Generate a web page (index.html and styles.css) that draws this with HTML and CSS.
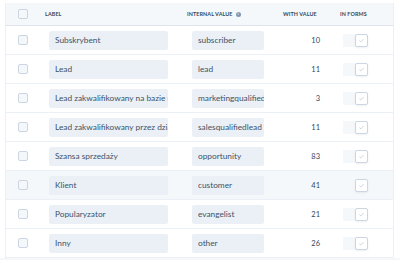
FILE: index.html
```
<!DOCTYPE html>
<html>
<head>
<meta charset="utf-8">
<link rel="stylesheet" href="styles.css">
</head>
<body>
<div class="page">
  <div class="table">
    <div class="row head">
      <div class="c-check"><span class="cb"></span></div>
      <div class="c-label">Label</div>
      <div class="c-int">Internal value <span class="info">i</span></div>
      <div class="c-with">With value</div>
      <div class="c-forms">In forms</div>
    </div>
    <div class="row">
      <div class="c-check"><span class="cb"></span></div>
      <div class="c-label"><div class="field field-label">Subskrybent</div></div>
      <div class="c-int"><div class="field field-int">subscriber</div></div>
      <div class="c-num">10</div>
      <div class="c-forms"><span class="toggle"><span class="pad"></span><span class="box"><svg viewBox="0 0 10 10" width="7" height="7"><polyline points="2,5.2 4,7 8,3" fill="none" stroke="#b0c1d4" stroke-width="1"/></svg></span></span></div>
    </div>
    <div class="row">
      <div class="c-check"><span class="cb"></span></div>
      <div class="c-label"><div class="field field-label">Lead</div></div>
      <div class="c-int"><div class="field field-int">lead</div></div>
      <div class="c-num">11</div>
      <div class="c-forms"><span class="toggle"><span class="pad"></span><span class="box"><svg viewBox="0 0 10 10" width="7" height="7"><polyline points="2,5.2 4,7 8,3" fill="none" stroke="#b0c1d4" stroke-width="1"/></svg></span></span></div>
    </div>
    <div class="row">
      <div class="c-check"><span class="cb"></span></div>
      <div class="c-label"><div class="field field-label">Lead zakwalifikowany na bazie marketingu</div></div>
      <div class="c-int"><div class="field field-int">marketingqualifiedlead</div></div>
      <div class="c-num">3</div>
      <div class="c-forms"><span class="toggle"><span class="pad"></span><span class="box"><svg viewBox="0 0 10 10" width="7" height="7"><polyline points="2,5.2 4,7 8,3" fill="none" stroke="#b0c1d4" stroke-width="1"/></svg></span></span></div>
    </div>
    <div class="row">
      <div class="c-check"><span class="cb"></span></div>
      <div class="c-label"><div class="field field-label">Lead zakwalifikowany przez dział sprzedaży</div></div>
      <div class="c-int"><div class="field field-int">salesqualifiedlead</div></div>
      <div class="c-num">11</div>
      <div class="c-forms"><span class="toggle"><span class="pad"></span><span class="box"><svg viewBox="0 0 10 10" width="7" height="7"><polyline points="2,5.2 4,7 8,3" fill="none" stroke="#b0c1d4" stroke-width="1"/></svg></span></span></div>
    </div>
    <div class="row">
      <div class="c-check"><span class="cb"></span></div>
      <div class="c-label"><div class="field field-label">Szansa sprzedaży</div></div>
      <div class="c-int"><div class="field field-int">opportunity</div></div>
      <div class="c-num">83</div>
      <div class="c-forms"><span class="toggle"><span class="pad"></span><span class="box"><svg viewBox="0 0 10 10" width="7" height="7"><polyline points="2,5.2 4,7 8,3" fill="none" stroke="#b0c1d4" stroke-width="1"/></svg></span></span></div>
    </div>
    <div class="row hover">
      <div class="c-check"><span class="cb"></span></div>
      <div class="c-label"><div class="field field-label">Klient</div></div>
      <div class="c-int"><div class="field field-int">customer</div></div>
      <div class="c-num">41</div>
      <div class="c-forms"><span class="toggle"><span class="pad"></span><span class="box"><svg viewBox="0 0 10 10" width="7" height="7"><polyline points="2,5.2 4,7 8,3" fill="none" stroke="#b0c1d4" stroke-width="1"/></svg></span></span></div>
    </div>
    <div class="row">
      <div class="c-check"><span class="cb"></span></div>
      <div class="c-label"><div class="field field-label">Popularyzator</div></div>
      <div class="c-int"><div class="field field-int">evangelist</div></div>
      <div class="c-num">21</div>
      <div class="c-forms"><span class="toggle"><span class="pad"></span><span class="box"><svg viewBox="0 0 10 10" width="7" height="7"><polyline points="2,5.2 4,7 8,3" fill="none" stroke="#b0c1d4" stroke-width="1"/></svg></span></span></div>
    </div>
    <div class="row">
      <div class="c-check"><span class="cb"></span></div>
      <div class="c-label"><div class="field field-label">Inny</div></div>
      <div class="c-int"><div class="field field-int">other</div></div>
      <div class="c-num">26</div>
      <div class="c-forms"><span class="toggle"><span class="pad"></span><span class="box"><svg viewBox="0 0 10 10" width="7" height="7"><polyline points="2,5.2 4,7 8,3" fill="none" stroke="#b0c1d4" stroke-width="1"/></svg></span></span></div>
    </div>
  </div>
  <div class="band"></div>
</div>
</body>
</html>
```

FILE: styles.css
```
* { box-sizing: border-box; }
html, body { margin: 0; padding: 0; background: #ffffff; }
body {
  font-family: "Lato", "Liberation Sans", sans-serif;
  color: #33475b;
  width: 400px;
  height: 260px;
  overflow: hidden;
}
.page { padding-top: 3px; }
.table {
  margin-left: 5px;
  width: 389px;
  border-left: 1px solid #eaf0f6;
  border-right: 1px solid #eaf0f6;
}
.row {
  display: grid;
  grid-template-columns: 38px 143px 90px 51px 1fr;
  align-items: center;
  height: 29px;
  border-bottom: 1px solid #eaf0f6;
}
.row.head {
  height: 23px;
  background: #f5f8fa;
  border-bottom: 1px solid #dfe3eb;
  font-size: 5.4px;
  font-weight: 700;
  text-transform: uppercase;
  letter-spacing: 0.1px;
  color: #33475b;
}
.row.hover { background: #f5f8fa; }
.c-check { padding-left: 12px; display: flex; align-items: center; }
.cb {
  display: block;
  width: 10px;
  height: 10px;
  border: 1px solid #cbd6e2;
  border-radius: 2px;
  background: #f5f8fa;
}
.head .c-label { padding-left: 1px; }
.head .c-int { display: flex; align-items: center; gap: 3px; }
.head .c-with { padding-left: 6px; }
.head .c-forms { padding-left: 12px; }
.info {
  display: inline-flex;
  align-items: center;
  justify-content: center;
  width: 5px;
  height: 5px;
  border-radius: 50%;
  background: #7c98b6;
  color: #ffffff;
  font-size: 4px;
  font-weight: 700;
  text-transform: none;
  line-height: 1;
}
.field {
  height: 19px;
  background: #eaf0f6;
  border-radius: 2px;
  font-size: 8.3px;
  line-height: 19px;
  padding-left: 6px;
  white-space: nowrap;
  overflow: hidden;
  margin-left: 5px;
  color: #3e5368;
}
.field-label { width: 119px; }
.field-int { width: 72px; }
.c-num {
  text-align: right;
  padding-right: 8px;
  font-size: 7.5px;
}
.c-forms { padding-left: 15px; display: flex; align-items: center; }
.toggle { display: flex; align-items: center; }
.pad {
  display: block;
  width: 12px;
  height: 13px;
  background: #f5f8fa;
}
.hover .pad { background: transparent; }
.box {
  display: flex;
  align-items: center;
  justify-content: center;
  width: 13px;
  height: 13px;
  border: 1px solid #cbd6e2;
  border-radius: 2px;
  background: #ffffff;
  box-shadow: 0 1px 2px rgba(45, 62, 80, 0.08);
}
.band {
  height: 10px;
  background: #f5f8fa;
}
```
